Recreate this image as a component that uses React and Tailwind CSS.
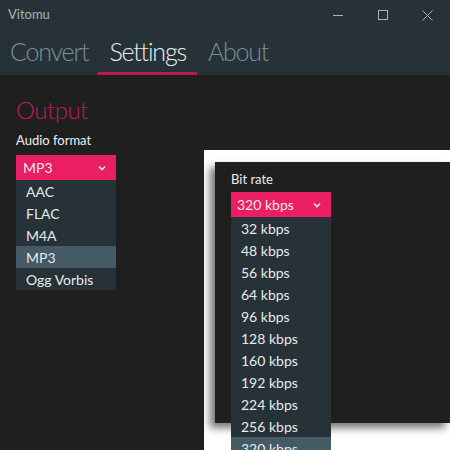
import React from "react";

const font = { fontFamily: 'Lato, "Open Sans", sans-serif' };

function Chevron() {
  return (
    <svg width="8" height="6" viewBox="0 0 8 6" className="shrink-0">
      <path d="M1 1.5 L4 4.5 L7 1.5" stroke="#fce4ec" strokeWidth="1.6" fill="none" />
    </svg>
  );
}

function Dropdown({ value, items, selected, textPad }) {
  return (
    <div className="w-[100px] flex flex-col">
      <div className={`h-[25px] bg-[#e91e63] flex items-center justify-between ${textPad} pr-[10px] text-[14px] text-[#fde7ef]`}>
        <span>{value}</span>
        <Chevron />
      </div>
      <div className="bg-[#263238] flex flex-col">
        {items.map((it) => (
          <div
            key={it}
            className={`h-[22px] flex items-center pl-[10px] text-[14px] text-[#e6eaec] ${it === selected ? "bg-[#455a64]" : ""}`}
          >
            {it}
          </div>
        ))}
      </div>
    </div>
  );
}

export default function App() {
  const bitrates = ["32 kbps", "48 kbps", "56 kbps", "64 kbps", "96 kbps", "128 kbps", "160 kbps", "192 kbps", "224 kbps", "256 kbps", "320 kbps"];
  return (
    <div className="w-[450px] h-[450px] bg-[#1f1f1f] relative overflow-hidden" style={font}>
      <div className="bg-[#263238] h-[75px] flex flex-col">
        <div className="h-[30px] flex items-center justify-between">
          <span className="pl-[8px] text-[13px] text-[#a9b4ba]">Vitomu</span>
          <div className="flex items-center h-full">
            <div className="w-[45px] h-full flex items-center justify-center">
              <div className="w-[10px] h-px bg-[#a9b4ba]" />
            </div>
            <div className="w-[45px] h-full flex items-center justify-center">
              <div className="w-[10px] h-[10px] border border-[#a9b4ba]" />
            </div>
            <div className="w-[45px] h-full flex items-center justify-center">
              <svg width="11" height="11" viewBox="0 0 11 11">
                <path d="M0.5 0.5 L10.5 10.5 M10.5 0.5 L0.5 10.5" stroke="#a9b4ba" strokeWidth="1" />
              </svg>
            </div>
          </div>
        </div>
        <div className="flex h-[45px] items-stretch text-[25px] font-light tracking-[-1.2px] leading-none">
          <div className="px-[10px] flex items-center text-[#78909c] pb-[3px]">Convert</div>
          <div className="px-[11px] flex items-center text-[#eceff1] relative pb-[3px]">
            Settings
            <div className="absolute left-0 right-0 bottom-[0px] h-[3px] bg-[#b8175a]" />
          </div>
          <div className="px-[11px] flex items-center text-[#78909c] pb-[3px]">About</div>
        </div>
      </div>

      <div className="px-[16px] pt-[20px] flex flex-col">
        <div className="text-[24px] font-light tracking-[-0.5px] text-[#c2185b] leading-[30px]">Output</div>
        <div className="mt-[7px] text-[13px] text-[#eceff1] leading-[16px]">Audio format</div>
        <div className="mt-[7px]">
          <Dropdown value="MP3" items={["AAC", "FLAC", "M4A", "MP3", "Ogg Vorbis"]} selected="MP3" textPad="pl-[7px]" />
        </div>
      </div>

      <div className="absolute left-[204px] top-[150px] w-[246px] h-[300px] bg-white">
        <div className="absolute left-[11px] top-[12px] w-[235px] h-[261px] bg-[#1f1f1f] shadow-[-5px_5px_8px_rgba(0,0,0,0.55)]">
          <div className="pl-[16px] pt-[9px] flex flex-col">
            <div className="text-[13px] text-[#eceff1] leading-[16px]">Bit rate</div>
            <div className="mt-[5px]">
              <Dropdown value="320 kbps" items={bitrates} selected="320 kbps" textPad="pl-[6px]" />
            </div>
          </div>
        </div>
      </div>
    </div>
  );
}
